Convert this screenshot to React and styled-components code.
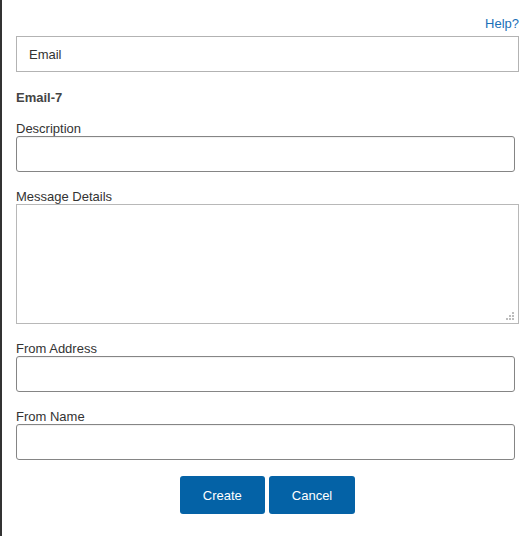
import React from 'react';
import styled, { createGlobalStyle } from 'styled-components';

const GlobalStyle = createGlobalStyle`
  html, body {
    margin: 0;
    padding: 0;
    background: #fff;
  }
  body {
    font-family: "Liberation Sans", Arial, sans-serif;
    color: #333;
  }
`;

// dotted resize handle like the old browser one
const Grip = () => (
  <GripIcon width="9" height="9" viewBox="0 0 9 9">
    <rect x="6" y="0" width="2" height="2" />
    <rect x="3" y="3" width="2" height="2" />
    <rect x="6" y="3" width="2" height="2" />
    <rect x="0" y="6" width="2" height="2" />
    <rect x="3" y="6" width="2" height="2" />
    <rect x="6" y="6" width="2" height="2" />
  </GripIcon>
);

const App = () => {
  return (
    <>
      <GlobalStyle />
      <Panel>
        <HelpLink href="#">Help?</HelpLink>
        <TypeBox>Email</TypeBox>
        <Title>Email-7</Title>

        <Field>
          <Label>Description</Label>
          <TextInput type="text" />
        </Field>

        <Field>
          <Label>Message Details</Label>
          <AreaWrap>
            <MessageArea />
            <Grip />
          </AreaWrap>
        </Field>

        <Field>
          <Label>From Address</Label>
          <TextInput type="text" />
        </Field>

        <Field>
          <Label>From Name</Label>
          <TextInput type="text" />
        </Field>

        <ButtonRow>
          <ActionBtn>Create</ActionBtn>
          <ActionBtn>Cancel</ActionBtn>
        </ButtonRow>
      </Panel>
    </>
  );
};

const Panel = styled.div`
  box-sizing: border-box;
  min-height: 536px;
  border-left: 2px solid #333;
  padding: 16px 12px 0 14px;
  display: flex;
  flex-direction: column;
`;

const HelpLink = styled.a`
  align-self: flex-end;
  font-size: 13px;
  line-height: 15px;
  color: #1a6fb8;
  text-decoration: none;
  margin-bottom: 5px;
`;

const TypeBox = styled.div`
  box-sizing: border-box;
  height: 36px;
  border: 1px solid #b3b3b3;
  padding-left: 12px;
  display: flex;
  align-items: center;
  font-size: 13px;
  color: #333;
`;

const Title = styled.div`
  margin-top: 18px;
  font-size: 13px;
  line-height: 15px;
  font-weight: bold;
  color: #444;
`;

const Field = styled.div`
  display: flex;
  flex-direction: column;
  margin-top: 16px;

  & + & {
    margin-top: 17px;
  }
`;

const Label = styled.label`
  font-size: 13px;
  line-height: 15px;
  color: #333;
`;

const TextInput = styled.input`
  box-sizing: border-box;
  width: calc(100% - 4px);
  height: 36px;
  margin: 0;
  border: 1px solid #858585;
  border-radius: 3px;
  box-shadow: inset 0 1px 1px rgba(0, 0, 0, 0.06);
  font-family: inherit;
  font-size: 13px;
  padding: 0 8px;
  outline: none;
`;

const AreaWrap = styled.div`
  position: relative;
  display: flex;
`;

const MessageArea = styled.textarea`
  box-sizing: border-box;
  width: 100%;
  height: 120px;
  margin: 0;
  border: 1px solid #b8b8b8;
  border-radius: 0;
  font-family: inherit;
  font-size: 13px;
  padding: 6px 8px;
  resize: none;
  outline: none;
`;

const GripIcon = styled.svg`
  position: absolute;
  right: 4px;
  bottom: 3px;
  fill: #bdbdbd;
  pointer-events: none;
`;

const ButtonRow = styled.div`
  display: flex;
  justify-content: center;
  gap: 4px;
  margin-top: 16px;
`;

const ActionBtn = styled.button`
  height: 38px;
  padding: 0 23px;
  border: none;
  border-radius: 3px;
  background: #0462a6;
  color: #fff;
  font-family: "Liberation Sans", Arial, sans-serif;
  font-size: 13px;
  cursor: pointer;
`;

export default App;
